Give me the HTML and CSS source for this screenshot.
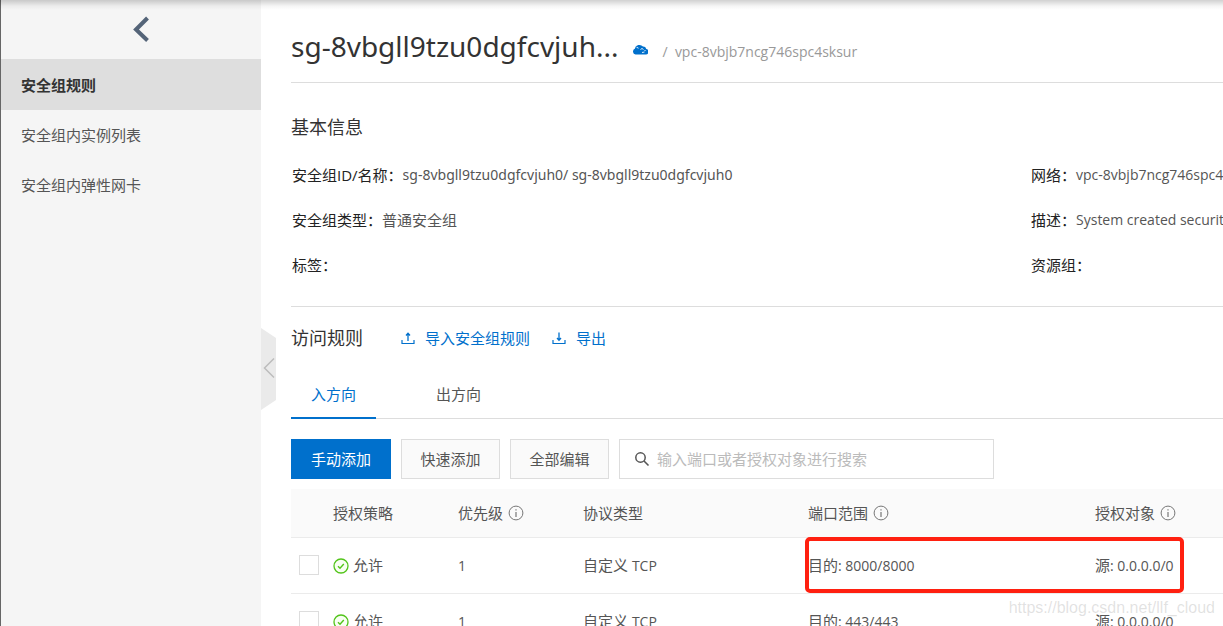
FILE: index.html
```
<!DOCTYPE html>
<html lang="zh-CN">
<head>
<meta charset="utf-8">
<title>安全组规则</title>
<link rel="stylesheet" href="styles.css">
</head>
<body>
<div class="app">
  <aside class="sidebar">
    <button class="back" aria-label="返回">
      <svg width="18" height="26" viewBox="0 0 18 26"><path d="M15.500 2 4 13.500 15.500 24.500" fill="none" stroke="#546478" stroke-width="4"/></svg>
    </button>
    <nav class="menu">
      <a class="menu-item active" href="#rules">安全组规则</a>
      <a class="menu-item" href="#instances">安全组内实例列表</a>
      <a class="menu-item" href="#eni">安全组内弹性网卡</a>
    </nav>
    <button class="collapse" aria-label="收起">
      <svg width="15" height="82" viewBox="0 0 15 82"><path d="M0 0 15 10V72L0 82Z" fill="#eaeaea"/><path d="M13 30.500 3.500 40 13 49.500" fill="none" stroke="#bcbcbc" stroke-width="1.500"/></svg>
    </button>
  </aside>

  <main class="content">
    <header class="page-head">
      <h1 class="title">sg-8vbgll9tzu0dgfcvjuh...</h1>
      <svg class="cloud" width="16" height="12" viewBox="0 0 16 12"><path d="M3.500 10.500A3 3 0 0 1 2.800 4.800 4.700 4.700 0 0 1 11 2.600 3.300 3.300 0 0 1 14.300 5 2.700 2.700 0 0 1 13 10.500Z" fill="#0070cc"/><path d="M4.500 3.200 6.500 4.200M8.500 5.500 10 4.500 11.500 5.500M10 8.500 12.500 8M13 6V7" fill="none" stroke="#fff" stroke-width=".9"/></svg>
      <span class="vpc">/&nbsp; vpc-8vbjb7ncg746spc4sksur</span>
    </header>

    <section class="info">
      <h2 class="section-title">基本信息</h2>
      <dl class="info-grid">
        <div class="field"><dt>安全组ID/名称：</dt><dd class="ident">sg-8vbgll9tzu0dgfcvjuh0/ sg-8vbgll9tzu0dgfcvjuh0</dd></div>
        <div class="field"><dt>网络：</dt><dd>vpc-8vbjb7ncg746spc4sksur</dd></div>
        <div class="field"><dt>安全组类型：</dt><dd class="cjk">普通安全组</dd></div>
        <div class="field"><dt>描述：</dt><dd>System created security group.</dd></div>
        <div class="field"><dt>标签：</dt><dd></dd></div>
        <div class="field"><dt>资源组：</dt><dd></dd></div>
      </dl>
    </section>

    <section class="rules">
      <div class="rules-head">
        <h2 class="section-title">访问规则</h2>
        <a class="action" href="#import">
          <svg width="14" height="14" viewBox="0 0 14 14"><path d="M1 9V12.500H13V9" fill="none" stroke="#0070cc" stroke-width="1.200"/><path d="M7 10V2.500M5 4.500 7 2.300 9 4.500" fill="none" stroke="#0070cc" stroke-width="1.300"/></svg>
          导入安全组规则</a>
        <a class="action" href="#export">
          <svg width="14" height="14" viewBox="0 0 14 14"><path d="M1 9V12.500H13V9" fill="none" stroke="#0070cc" stroke-width="1.200"/><path d="M7 1.500V9M5 7 7 9.200 9 7" fill="none" stroke="#0070cc" stroke-width="1.300"/></svg>
          导出</a>
      </div>
      <div class="tabs" role="tablist">
        <button class="tab selected" role="tab" aria-selected="true">入方向</button>
        <button class="tab" role="tab" aria-selected="false">出方向</button>
      </div>
      <div class="toolbar">
        <button class="btn primary">手动添加</button>
        <button class="btn">快速添加</button>
        <button class="btn">全部编辑</button>
        <label class="search">
          <svg width="16" height="16" viewBox="0 0 16 16"><circle cx="6.500" cy="6.500" r="4.700" fill="none" stroke="#555" stroke-width="1.500"/><path d="M10 10 14.500 14.500" stroke="#555" stroke-width="1.600"/></svg>
          <input type="text" aria-label="搜索" placeholder="输入端口或者授权对象进行搜索">
        </label>
      </div>

      <div class="table-wrap">
        <table class="table">
          <colgroup><col class="c-check"><col class="c-small"><col class="c-small"><col class="c-type"><col><col class="c-source"></colgroup>
          <thead>
            <tr>
              <th></th>
              <th>授权策略</th>
              <th><span class="with-icon">优先级 <svg width="16" height="16" viewBox="0 0 16 16"><use href="#info"/></svg></span></th>
              <th>协议类型</th>
              <th><span class="with-icon">端口范围 <svg width="16" height="16" viewBox="0 0 16 16"><use href="#info"/></svg></span></th>
              <th><span class="with-icon">授权对象 <svg width="16" height="16" viewBox="0 0 16 16"><use href="#info"/></svg></span></th>
            </tr>
          </thead>
          <tbody>
            <tr>
              <td class="check"><input type="checkbox" aria-label="选择 8000/8000"></td>
              <td><span class="with-icon allow"><svg width="16" height="16" viewBox="0 0 16 16"><use href="#ok"/></svg>允许</span></td>
              <td><span class="num">1</span></td>
              <td>自定义 <span class="num">TCP</span></td>
              <td>目的<span class="num">: 8000/8000</span></td>
              <td>源<span class="num">: 0.0.0.0/0</span></td>
            </tr>
            <tr>
              <td class="check"><input type="checkbox" aria-label="选择 443/443"></td>
              <td><span class="with-icon allow"><svg width="16" height="16" viewBox="0 0 16 16"><use href="#ok"/></svg>允许</span></td>
              <td><span class="num">1</span></td>
              <td>自定义 <span class="num">TCP</span></td>
              <td>目的<span class="num">: 443/443</span></td>
              <td>源<span class="num">: 0.0.0.0/0</span></td>
            </tr>
          </tbody>
        </table>
        <div class="highlight"></div>
      </div>
    </section>
  </main>
  <div class="watermark">https://blog.csdn.net/llf_cloud</div>
</div>
<svg width="0" height="0" class="defs">
  <symbol id="info" viewBox="0 0 16 16"><circle cx="8" cy="8" r="6.900" fill="none" stroke="#777"/><path d="M8 7V12M8 4.200V5.500" stroke="#777" stroke-width="1.200"/></symbol>
  <symbol id="ok" viewBox="0 0 16 16"><circle cx="8" cy="8" r="7" fill="#f8fff2" stroke="#52c41a" stroke-width="1.300"/><path d="M5 8.200 7 10.200 10.800 6" fill="none" stroke="#52c41a" stroke-width="1.400"/></symbol>
</svg>
</body>
</html>
```
FILE: styles.css
```
* { box-sizing: border-box; }
body {
  margin: 0;
  color: #555;
  font: 15px/20px "Open Sans", "Noto Sans CJK SC", sans-serif;
  background: #fff;
}
h1, h2, dl, dd { margin: 0; font-weight: 400; }
a { text-decoration: none; }
button, input { font: inherit; }
button { padding: 0; border: 0; background: none; cursor: pointer; }
.defs { position: absolute; }

.app {
  position: relative;
  display: flex;
  height: 100vh;
  overflow: hidden;
}
.app::before {
  content: "";
  position: absolute;
  z-index: 1;
  inset: 0 0 auto;
  height: 10px;
  background: linear-gradient(rgba(0, 0, 0, .18), rgba(0, 0, 0, .04) 60%, transparent);
  pointer-events: none;
}

.sidebar {
  position: relative;
  flex: 0 0 261px;
  border-left: 1px solid #666;
  background: #f5f5f5;
}
.back {
  display: flex;
  align-items: center;
  justify-content: center;
  width: 100%;
  height: 59px;
  padding: 0 0 2px 20px;
}
.menu { display: flex; flex-direction: column; }
.menu-item {
  height: 50px;
  padding: 0 20px;
  color: #555;
  line-height: 50px;
}
.menu-item.active { height: 51px; background: #dedede; color: #333; font-weight: 700; line-height: 52px; }
.collapse { position: absolute; top: 328px; left: 100%; height: 82px; }
.collapse svg { display: block; }

.content { flex: 1; min-width: 0; padding-left: 30px; overflow: hidden; }
.page-head {
  display: flex;
  align-items: center;
  height: 83px;
  padding-top: 10px;
  border-bottom: 1px solid #ddd;
  white-space: nowrap;
}
.title { color: #333; font: 28px/40px "Noto Sans", sans-serif; }
.cloud { margin: 8px 14px 0; }
.vpc { margin-top: 12px; color: #999; font-size: 14px; }

.section-title { color: #333; font-size: 18px; line-height: 28px; }
.info { padding: 30px 0 31px; border-bottom: 1px solid #ddd; }
.info-grid {
  display: grid;
  grid-template-columns: minmax(0, 1fr) 192px;
  row-gap: 25px;
  padding: 24px 0 0 1px;
}
.field { display: flex; white-space: nowrap; }
.field dt { color: #222; }
.field dd { font-size: 14px; }
.field .cjk { font-size: 15px; }
.field .ident { font-family: "Noto Sans", sans-serif; }

.rules-head { display: flex; align-items: center; padding-top: 17px; }
.action { display: flex; align-items: center; gap: 10px; margin-right: 22px; color: #0070cc; }
.rules-head .section-title { margin-right: 38px; }
.tabs { display: flex; gap: 40px; margin-top: 20px; border-bottom: 1px solid #ddd; }
.tab { height: 47px; margin-bottom: -1px; padding: 0 20px 2px; border-bottom: 2px solid transparent; color: #555; }
.tab.selected { border-color: #0070cc; color: #0070cc; }
.toolbar { display: flex; gap: 10px; padding: 20px 0 10px; }
.btn { width: 99px; height: 40px; border: 1px solid #ddd; background: #fafafa; color: #555; }
.btn.primary { width: 100px; border-color: #0070cc; background: #0070cc; color: #fff; }
.search {
  display: flex;
  align-items: center;
  gap: 7px;
  width: 375px;
  height: 40px;
  padding: 0 14px;
  border: 1px solid #ddd;
}
.search input { flex: 1; min-width: 0; padding: 0; border: 0; outline: 0; background: none; }
.search input::placeholder { color: #bbb; }

.table-wrap { position: relative; }
.table { width: 100%; table-layout: fixed; border-collapse: collapse; white-space: nowrap; }
.c-check { width: 42px; }
.c-small { width: 125px; }
.c-type { width: 225px; }
.c-source { width: 128px; }
.table th, .table td { padding: 0; border-bottom: 1px solid #ebebeb; text-align: left; font-weight: 400; }
.table th { height: 48px; background: #fafafa; }
.table td { height: 56px; }
.table .check { padding-left: 8px; }
.check input {
  display: block;
  appearance: none;
  width: 20px;
  height: 20px;
  margin: 0;
  border: 1px solid #ddd;
  background: #fff;
}
.with-icon { display: flex; align-items: center; gap: 5px; }
.allow { gap: 4px; }
.allow svg { margin-top: 2px; }
.num { font-size: 14px; }
.highlight {
  position: absolute;
  top: 48px;
  right: 39px;
  left: 514px;
  height: 56px;
  border: 4px solid #ff2010;
  border-radius: 5px;
}
.watermark {
  position: absolute;
  right: 8px;
  bottom: 8px;
  color: rgba(150, 150, 150, .28);
  font: 16px/20px "Liberation Sans", sans-serif;
}
```
